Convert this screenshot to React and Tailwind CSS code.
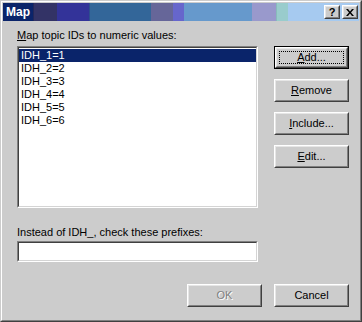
import React from "react";

const font = { fontFamily: '"Liberation Sans", Arial, sans-serif' };

function Raised({ className = "", children, inner = "" }) {
  return (
    <div className={"border border-t-white border-l-white border-r-[#404040] border-b-[#404040] bg-[#cccccc] " + className}>
      <div className={"w-full h-full border border-t-[#e6e6e6] border-l-[#e6e6e6] border-r-[#808080] border-b-[#808080] flex items-center justify-center " + inner}>
        {children}
      </div>
    </div>
  );
}

function Sunken({ className = "", children }) {
  return (
    <div className={"border border-t-[#808080] border-l-[#808080] border-r-white border-b-white " + className}>
      <div className="w-full h-full border border-t-[#404040] border-l-[#404040] border-r-[#d4d4d4] border-b-[#d4d4d4] bg-white overflow-hidden">
        {children}
      </div>
    </div>
  );
}

function Btn({ children, disabled }) {
  return (
    <Raised className="w-[75px] h-[23px]">
      <span className={"text-[11px] leading-[13px] " + (disabled ? "text-[#808080] [text-shadow:1px_1px_0_#ffffff]" : "text-black")}>{children}</span>
    </Raised>
  );
}

export default function App() {
  const items = ["IDH_1=1", "IDH_2=2", "IDH_3=3", "IDH_4=4", "IDH_5=5", "IDH_6=6"];
  return (
    <div style={font} className="w-[362px] h-[322px] bg-[#cccccc]">
      <div className="w-full h-full border border-t-[#cccccc] border-l-[#cccccc] border-r-[#404040] border-b-[#404040]">
        <div className="w-full h-full border border-t-white border-l-white border-r-[#808080] border-b-[#808080] p-px flex flex-col">
          {/* title bar */}
          <div className="h-[18px] flex items-stretch relative">
            <div className="w-[30px] bg-[#0a246a]" />
            <div className="w-px bg-[#22285a]" />
            <div className="w-[23px] bg-[#333366]" />
            <div className="w-[32px] bg-[#333399]" />
            <div className="w-px bg-[#2d4f8e]" />
            <div className="w-[61px] bg-[#336699]" />
            <div className="w-[22px] bg-[#666699]" />
            <div className="w-[11px] bg-[#6666cc]" />
            <div className="w-[68px] bg-[#6699cc]" />
            <div className="w-[24px] bg-[#9999cc]" />
            <div className="w-px bg-[#88bbbb]" />
            <div className="w-[11px] bg-[#99cccc]" />
            <div className="flex-1 bg-[#a6caf0]" />
            <div className="absolute left-[3px] top-0 h-[18px] flex items-center text-white font-bold text-[12px]">Map</div>
            <div className="absolute right-[1px] top-[2px] flex gap-[2px]">
              <Raised className="w-[16px] h-[14px]">
                <span className="text-[11px] font-bold leading-none text-black">?</span>
              </Raised>
              <Raised className="w-[16px] h-[14px]">
                <svg width="8" height="7" viewBox="0 0 8 7">
                  <path d="M0 0h2l2 2.5L6 0h2L5 3.5 8 7H6L4 4.5 2 7H0l3-3.5z" fill="#000" />
                </svg>
              </Raised>
            </div>
          </div>
          {/* body */}
          <div className="flex-1 pl-[14px] pt-[8px] flex flex-col text-[11px] leading-[13px] text-black">
            <div className="flex gap-[16px]">
              <div className="w-[241px] flex flex-col">
                <div className="h-[13px] mb-[4px]"><span className="underline">M</span>ap topic IDs to numeric values:</div>
                <Sunken className="w-[241px] h-[162px]">
                  <div className="flex flex-col pt-px">
                    {items.map((it, i) => (
                      <div key={it} className={"h-[13px] pl-[2px] " + (i === 0 ? "bg-[#0a246a] text-white" : "")}>{it}</div>
                    ))}
                  </div>
                </Sunken>
              </div>
              <div className="pt-[17px] flex flex-col gap-[10px]">
                <div className="w-[75px] h-[23px] border border-black">
                  <Raised className="w-full h-full" inner="p-[2px]">
                    <div className="w-full h-full border border-dotted border-black flex items-center justify-center"><span><span className="underline">A</span>dd...</span></div>
                  </Raised>
                </div>
                <Btn><span className="underline">R</span>emove</Btn>
                <Btn><span className="underline">I</span>nclude...</Btn>
                <Btn><span className="underline">E</span>dit...</Btn>
              </div>
            </div>
            <div className="mt-[18px] h-[13px] mb-[2px]">Instead of IDH_, check these prefixes:</div>
            <Sunken className="w-[241px] h-[21px]" />
            <div className="mt-[22px] flex gap-[12px] pl-[170px]">
              <Btn disabled>OK</Btn>
              <Btn>Cancel</Btn>
            </div>
          </div>
        </div>
      </div>
    </div>
  );
}
